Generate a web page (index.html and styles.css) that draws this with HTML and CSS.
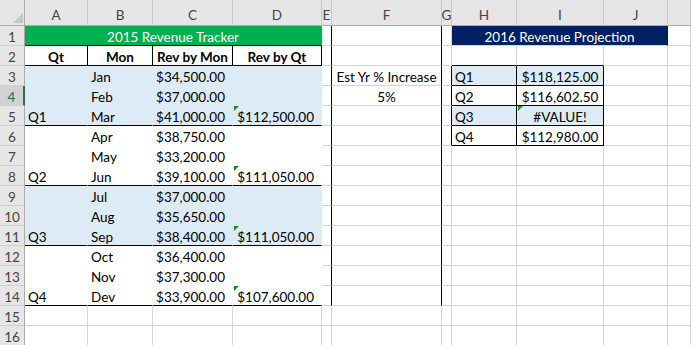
FILE: index.html
```html
<!DOCTYPE html>
<html>
<head>
<meta charset="utf-8">
<link rel="stylesheet" href="styles.css">
</head>
<body>
<div class="sheet">
  <!-- column headers -->
  <div class="c corner"><span class="corner-tri"></span></div>
  <div class="c ch">A</div><div class="c ch">B</div><div class="c ch">C</div><div class="c ch">D</div>
  <div class="c ch">E</div><div class="c ch">F</div><div class="c ch">G</div><div class="c ch">H</div>
  <div class="c ch">I</div><div class="c ch">J</div><div class="c ch"></div>

  <!-- row 1 -->
  <div class="c rh">1</div>
  <div class="c title-green span4">2015 Revenue Tracker</div>
  <div class="c br"></div><div class="c br"></div><div class="c"></div>
  <div class="c title-navy span3">2016 Revenue Projection</div>
  <div class="c"></div>

  <!-- row 2 -->
  <div class="c rh">2</div>
  <div class="c hd br bb">Qt</div><div class="c hd br bb">Mon</div><div class="c hd br bb">Rev by Mon</div><div class="c hd br bb">Rev by Qt</div>
  <div class="c br"></div><div class="c br"></div><div class="c"></div>
  <div class="c bb"></div><div class="c bb"></div><div class="c"></div><div class="c"></div>

  <!-- row 3 -->
  <div class="c rh">3</div>
  <div class="c fb"></div><div class="c fb">Jan</div><div class="c fb num">$34,500.00</div><div class="c fb"></div>
  <div class="c br"></div><div class="c br ctr">Est Yr % Increase</div><div class="c br"></div>
  <div class="c fb br bb">Q1</div><div class="c fb br bb ctr">$118,125.00</div><div class="c"></div><div class="c"></div>

  <!-- row 4 -->
  <div class="c rh sel">4</div>
  <div class="c fb"></div><div class="c fb">Feb</div><div class="c fb num">$37,000.00</div><div class="c fb"></div>
  <div class="c br"></div><div class="c br ctr">5%</div><div class="c br"></div>
  <div class="c br bb">Q2</div><div class="c br bb ctr">$116,602.50</div><div class="c"></div><div class="c"></div>

  <!-- row 5 -->
  <div class="c rh">5</div>
  <div class="c fb bb">Q1</div><div class="c fb bb">Mar</div><div class="c fb bb num">$41,000.00</div><div class="c fb bb num err">$112,500.00</div>
  <div class="c br"></div><div class="c br"></div><div class="c br"></div>
  <div class="c fb br bb">Q3</div><div class="c fb br bb ctr err">#VALUE!</div><div class="c"></div><div class="c"></div>

  <!-- row 6 -->
  <div class="c rh">6</div>
  <div class="c fw"></div><div class="c fw">Apr</div><div class="c fw num">$38,750.00</div><div class="c fw"></div>
  <div class="c br"></div><div class="c br"></div><div class="c br"></div>
  <div class="c br bb">Q4</div><div class="c br bb ctr">$112,980.00</div><div class="c"></div><div class="c"></div>

  <!-- row 7 -->
  <div class="c rh">7</div>
  <div class="c fw"></div><div class="c fw">May</div><div class="c fw num">$33,200.00</div><div class="c fw"></div>
  <div class="c br"></div><div class="c br"></div><div class="c"></div>
  <div class="c"></div><div class="c"></div><div class="c"></div><div class="c"></div>

  <!-- row 8 -->
  <div class="c rh">8</div>
  <div class="c fw bb">Q2</div><div class="c fw bb">Jun</div><div class="c fw bb num">$39,100.00</div><div class="c fw bb num err">$111,050.00</div>
  <div class="c br"></div><div class="c br"></div><div class="c"></div>
  <div class="c"></div><div class="c"></div><div class="c"></div><div class="c"></div>

  <!-- row 9 -->
  <div class="c rh">9</div>
  <div class="c fb"></div><div class="c fb">Jul</div><div class="c fb num">$37,000.00</div><div class="c fb"></div>
  <div class="c br"></div><div class="c br"></div><div class="c"></div>
  <div class="c"></div><div class="c"></div><div class="c"></div><div class="c"></div>

  <!-- row 10 -->
  <div class="c rh">10</div>
  <div class="c fb"></div><div class="c fb">Aug</div><div class="c fb num">$35,650.00</div><div class="c fb"></div>
  <div class="c br"></div><div class="c br"></div><div class="c"></div>
  <div class="c"></div><div class="c"></div><div class="c"></div><div class="c"></div>

  <!-- row 11 -->
  <div class="c rh">11</div>
  <div class="c fb bb">Q3</div><div class="c fb bb">Sep</div><div class="c fb bb num">$38,400.00</div><div class="c fb bb num err">$111,050.00</div>
  <div class="c br"></div><div class="c br"></div><div class="c"></div>
  <div class="c"></div><div class="c"></div><div class="c"></div><div class="c"></div>

  <!-- row 12 -->
  <div class="c rh">12</div>
  <div class="c fw"></div><div class="c fw">Oct</div><div class="c fw num">$36,400.00</div><div class="c fw"></div>
  <div class="c br"></div><div class="c br"></div><div class="c"></div>
  <div class="c"></div><div class="c"></div><div class="c"></div><div class="c"></div>

  <!-- row 13 -->
  <div class="c rh">13</div>
  <div class="c fw"></div><div class="c fw">Nov</div><div class="c fw num">$37,300.00</div><div class="c fw"></div>
  <div class="c br"></div><div class="c br"></div><div class="c"></div>
  <div class="c"></div><div class="c"></div><div class="c"></div><div class="c"></div>

  <!-- row 14 -->
  <div class="c rh">14</div>
  <div class="c fw bb">Q4</div><div class="c fw bb">Dev</div><div class="c fw bb num">$33,900.00</div><div class="c fw bb num err">$107,600.00</div>
  <div class="c br"></div><div class="c br"></div><div class="c"></div>
  <div class="c"></div><div class="c"></div><div class="c"></div><div class="c"></div>

  <!-- row 15 -->
  <div class="c rh">15</div>
  <div class="c"></div><div class="c"></div><div class="c"></div><div class="c"></div>
  <div class="c"></div><div class="c"></div><div class="c"></div>
  <div class="c"></div><div class="c"></div><div class="c"></div><div class="c"></div>

  <!-- row 16 -->
  <div class="c rh">16</div>
  <div class="c"></div><div class="c"></div><div class="c"></div><div class="c"></div>
  <div class="c"></div><div class="c"></div><div class="c"></div>
  <div class="c"></div><div class="c"></div><div class="c"></div><div class="c"></div>
</div>
</body>
</html>
```
FILE: styles.css
```css
html, body {
  margin: 0;
  padding: 0;
  background: #ffffff;
  overflow: hidden;
}

.sheet {
  display: grid;
  grid-template-columns: 25px 63px 65px 80px 89px 10px 110px 10px 65px 87px 64px 1fr;
  grid-template-rows: 26px;
  grid-auto-rows: 20px;
  width: 691px;
  font-family: Lato, "Open Sans", sans-serif;
  font-size: 13.5px;
  color: #000;
}

.c {
  box-sizing: border-box;
  display: flex;
  align-items: flex-end;
  justify-content: flex-start;
  line-height: 16px;
  padding: 0 3px;
  white-space: nowrap;
  border-right: 1px solid #d4d4d4;
  border-bottom: 1px solid #d4d4d4;
  background: #ffffff;
  min-width: 0;
}

/* headers */
.ch {
  background: #e6e6e6;
  color: #444444;
  justify-content: center;
  padding-bottom: 2px;
  border-right-color: #c8c8c8;
  border-bottom-color: #ababab;
}

.corner {
  background: #e6e6e6;
  border-right-color: #ababab;
  border-bottom-color: #ababab;
  justify-content: flex-end;
  padding: 0 1px 2px 0;
}

.corner-tri {
  width: 0;
  height: 0;
  border-left: 10px solid transparent;
  border-bottom: 10px solid #c6c6c6;
}

.rh {
  background: #e6e6e6;
  color: #444444;
  justify-content: center;
  border-right-color: #ababab;
  border-bottom-color: #cfcfcf;
}

.rh.sel {
  background: #d2d2d2;
  color: #217346;
  border-right: 2px solid #217346;
}

/* merged titles */
.span4 { grid-column: span 4; }
.span3 { grid-column: span 3; }

.title-green {
  background: #00b050;
  border-right-color: #00b050;
  border-bottom-color: #000000;
  color: #ffffff;
  justify-content: center;
}

.title-navy {
  background: #002060;
  border-right-color: #002060;
  border-bottom-color: #d4d4d4;
  color: #ffffff;
  justify-content: center;
}

/* fills */
.fb {
  background: #ddebf7;
  border-right-color: #ddebf7;
  border-bottom-color: #ddebf7;
}

.fw {
  background: #ffffff;
  border-right-color: #ffffff;
  border-bottom-color: #ffffff;
}

/* black borders */
.br { border-right-color: #000000; }
.bb { border-bottom-color: #000000; }

.hd {
  font-weight: 700;
  justify-content: center;
}

.num {
  justify-content: flex-end;
  padding-right: 7px;
}

.ctr { justify-content: center; }

.err { position: relative; }

.err::before {
  content: "";
  position: absolute;
  left: 1px;
  top: 0;
  width: 0;
  height: 0;
  border-top: 5px solid #1a8a2a;
  border-right: 5px solid transparent;
}
```
